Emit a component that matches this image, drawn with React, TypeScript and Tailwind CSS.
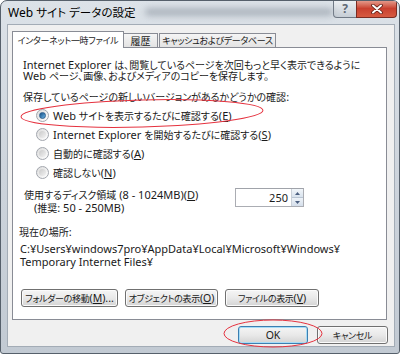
import React from "react";

const CJK = /([\u3000-\u30ff\u3400-\u9fff\uff00-\uffef]+)/;
const SMALL = "text-[9px] tracking-[-0.3px]";

function T({ s, cjk = "text-[10px]" }: { s: string; cjk?: string }) {
  return (
    <>
      {s.split(CJK).map((part, i) =>
        i % 2 ? (
          <span key={i} className={"inline-block leading-none " + cjk}>
            {part}
          </span>
        ) : (
          <React.Fragment key={i}>{part}</React.Fragment>
        )
      )}
    </>
  );
}

// label with an underlined access key, e.g. "(E)"
function Acc({ s, k, tail = "", cjk }: { s: string; k: string; tail?: string; cjk?: string }) {
  return (
    <>
      <T s={s} cjk={cjk} />(<u>{k}</u>){tail}
    </>
  );
}

function Radio({ checked, children }: { checked?: boolean; children: React.ReactNode }) {
  return (
    <div className="h-[19px] flex items-center">
      <div className="ml-[23px] w-[13px] h-[13px] rounded-full border border-[#a2a6ad] bg-gradient-to-br from-[#dcdcdc] to-[#ffffff] flex items-center justify-center">
        {checked ? (
          <div className="w-[7px] h-[7px] rounded-full bg-gradient-to-br from-[#0f4f86] to-[#6fb6e6] border border-[#2d5f8e]" />
        ) : (
          <div className="w-[7px] h-[7px] rounded-full bg-gradient-to-br from-[#c9c9c9] to-[#f3f3f3]" />
        )}
      </div>
      <span className="ml-[4px] leading-none whitespace-nowrap">{children}</span>
    </div>
  );
}

function Btn({ w, def, children }: { w: string; def?: boolean; children: React.ReactNode }) {
  return (
    <div
      className={
        "h-[18px] flex items-center justify-center rounded-[3px] border bg-gradient-to-b from-[#f5f5f5] via-[#e9e9e9] to-[#d4d4d4] text-[10.5px] leading-none whitespace-nowrap " +
        w +
        (def
          ? " border-[#3c7fb1] shadow-[inset_0_0_0_1px_#a6dcf7]"
          : " border-[#707070] shadow-[inset_0_0_0_1px_#fbfbfb]")
      }
    >
      {children}
    </div>
  );
}

export default function App() {
  return (
    <div className="w-[400px] h-[354px] relative font-['Noto_Sans','Noto_Sans_CJK_JP',sans-serif] [font-feature-settings:'palt'] text-[11px] text-[#1a1a1a]">
      <div className="w-[400px] h-[354px] flex flex-col border border-[#56606b] rounded-t-[7px] rounded-b-[3px] bg-gradient-to-b from-[#dce2e8] via-[#cdd4dc] to-[#c2cad3] overflow-hidden">
        {/* title bar */}
        <div className="h-[23px] flex items-start">
          <div className="pl-[7px] pt-[6px] text-[12px] leading-none text-black whitespace-nowrap">
            <T s="Web サイト データの設定" cjk="text-[11.5px]" />
          </div>
          <div className="ml-[10px] mt-[7px] h-[8px] w-[190px] rounded bg-[#8f98a3] opacity-60 blur-[3px]" />
          <div className="ml-auto mr-[2px] flex">
            <div className="w-[24px] h-[18px] -mt-px rounded-bl-[4px] border border-t-0 border-[#6f7884] bg-gradient-to-b from-[#eef1f4] to-[#c6cdd5] flex items-center justify-center text-[12px] font-bold leading-none text-[#5f6975]">
              ?
            </div>
            <div className="w-[41px] h-[18px] -mt-px -ml-px rounded-br-[4px] border border-t-0 border-[#7b2c22] bg-gradient-to-b from-[#e6a295] via-[#c9402f] to-[#d65a41] flex items-center justify-center">
              <svg width="12" height="10" viewBox="0 0 12 10">
                <path d="M2 1.5 L10 8.5 M10 1.5 L2 8.5" stroke="#5a1a12" strokeWidth="3.6" strokeLinecap="round" />
                <path d="M2 1.5 L10 8.5 M10 1.5 L2 8.5" stroke="#ffffff" strokeWidth="2" strokeLinecap="round" />
              </svg>
            </div>
          </div>
        </div>

        {/* client area */}
        <div className="ml-[6px] mr-[4px] mb-[6px] flex-1 bg-[#f0f0f0] border border-[#a3acb6] flex flex-col">
          <div className="ml-[4px] mr-[7px] pt-[6px]">
            {/* tabs */}
            <div className="relative z-10 -mb-px h-[17px] flex items-end">
              <div className="w-[112px] h-[17px] border border-b-0 border-[#898c95] bg-white flex items-center justify-center leading-none whitespace-nowrap">
                <T s="インターネット一時ファイル" cjk={SMALL} />
              </div>
              <div className="-ml-px mb-px w-[35px] h-[14px] border border-b-0 border-[#898c95] bg-gradient-to-b from-[#f5f5f5] to-[#e3e3e3] flex items-center justify-center leading-none">
                <T s="履歴" />
              </div>
              <div className="ml-px mb-px w-[117px] h-[14px] border border-b-0 border-[#898c95] bg-gradient-to-b from-[#f5f5f5] to-[#e3e3e3] flex items-center justify-center leading-none whitespace-nowrap">
                <T s="キャッシュおよびデータベース" cjk={SMALL} />
              </div>
            </div>

            {/* tab page */}
            <div className="h-[273px] border border-[#898c95] bg-white pt-[11px] flex flex-col">
              <div className="pl-[10px] h-[11px] leading-[11px] whitespace-nowrap">
                <T s="Internet Explorer は、閲覧しているページを次回もっと早く表示できるように" />
              </div>
              <div className="pl-[10px] h-[11px] leading-[11px] whitespace-nowrap">
                <T s="Web ページ、画像、およびメディアのコピーを保存します。" />
              </div>
              <div className="pl-[10px] mt-[10px] h-[12px] leading-[12px] whitespace-nowrap">
                <T s="保存しているページの新しいバージョンがあるかどうかの確認:" />
              </div>

              <div className="mt-[3px] flex flex-col">
                <Radio checked>
                  <Acc s="Web サイトを表示するたびに確認する" k="E" />
                </Radio>
                <Radio>
                  <Acc s="Internet Explorer を開始するたびに確認する" k="S" />
                </Radio>
                <Radio>
                  <Acc s="自動的に確認する" k="A" />
                </Radio>
                <Radio>
                  <Acc s="確認しない" k="N" />
                </Radio>
              </div>

              <div className="mt-[6px] flex items-start">
                <div className="w-[222px] pl-[11px] leading-[13px] whitespace-nowrap">
                  <div className="h-[13px]">
                    <Acc s="使用するディスク領域 (8 - 1024MB)" k="D" />
                  </div>
                  <div className="h-[13px] pl-[10px]">
                    <T s="(推奨: 50 - 250MB)" />
                  </div>
                </div>
                <div className="w-[69px] h-[19px] flex border border-[#abadb3] border-t-[#a0a3aa] bg-white">
                  <div className="flex-1 flex items-center justify-end pr-[3px] leading-none">250</div>
                  <div className="w-[12px] flex flex-col border-l border-[#c9d0d8]">
                    <div className="flex-1 flex items-center justify-center bg-gradient-to-b from-[#f2f6fa] to-[#d9e3ee] border-b border-[#b9c5d3]">
                      <svg width="5" height="3" viewBox="0 0 5 3">
                        <path d="M0 3 L2.5 0 L5 3 Z" fill="#4b5f80" />
                      </svg>
                    </div>
                    <div className="flex-1 flex items-center justify-center bg-gradient-to-b from-[#eef3f8] to-[#d5dfeb]">
                      <svg width="5" height="3" viewBox="0 0 5 3">
                        <path d="M0 0 L5 0 L2.5 3 Z" fill="#4b5f80" />
                      </svg>
                    </div>
                  </div>
                </div>
              </div>

              <div className="mt-[11px] pl-[6px] h-[13px] leading-[13px]">
                <T s="現在の場所:" />
              </div>
              <div className="mt-[4px] pl-[7px] leading-[13px] whitespace-nowrap">
                <div className="h-[13px]">C:¥Users¥windows7pro¥AppData¥Local¥Microsoft¥Windows¥</div>
                <div className="h-[13px]">Temporary Internet Files¥</div>
              </div>

              <div className="mt-[21px] ml-[8px] flex gap-[7px]">
                <Btn w="w-[97px]">
                  <Acc s="フォルダーの移動" k="M" tail="..." cjk={SMALL} />
                </Btn>
                <Btn w="w-[93px]">
                  <Acc s="オブジェクトの表示" k="O" cjk={SMALL} />
                </Btn>
                <Btn w="w-[94px]">
                  <Acc s="ファイルの表示" k="V" cjk={SMALL} />
                </Btn>
              </div>
            </div>
          </div>

          {/* dialog buttons */}
          <div className="mt-[6px] mr-[6px] flex justify-end gap-[9px]">
            <Btn w="w-[70px]" def>
              OK
            </Btn>
            <Btn w="w-[71px]">
              <T s="キャンセル" cjk={SMALL} />
            </Btn>
          </div>
        </div>
      </div>

      {/* red annotation rings drawn over the dialog */}
      <svg className="absolute inset-0 pointer-events-none" width="400" height="354">
        <ellipse cx="142" cy="113.5" rx="121" ry="13.5" fill="none" stroke="#e5323f" strokeWidth="1" transform="rotate(-1.5 142 113.5)" />
        <ellipse cx="273" cy="333.5" rx="49" ry="13.5" fill="none" stroke="#e5323f" strokeWidth="1" />
      </svg>
    </div>
  );
}
